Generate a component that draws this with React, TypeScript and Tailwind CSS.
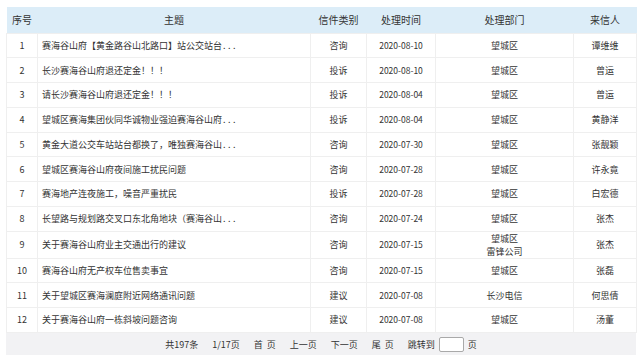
import React from "react";

type Row = {
  no: number;
  title: string;
  more?: boolean;
  type: string;
  date: string;
  dept: string[];
  person: string;
};

const rows: Row[] = [
  { no: 1, title: "赛海谷山府【黄金路谷山北路口】站公交站台", more: true, type: "咨询", date: "2020-08-10", dept: ["望城区"], person: "谭维维" },
  { no: 2, title: "长沙赛海谷山府退还定金！！！", type: "投诉", date: "2020-08-10", dept: ["望城区"], person: "曾运" },
  { no: 3, title: "请长沙赛海谷山府退还定金！！！", type: "投诉", date: "2020-08-04", dept: ["望城区"], person: "曾运" },
  { no: 4, title: "望城区赛海集团伙同华诚物业强迫赛海谷山府", more: true, type: "投诉", date: "2020-08-04", dept: ["望城区"], person: "黄静洋" },
  { no: 5, title: "黄金大道公交车站站台都换了，唯独赛海谷山", more: true, type: "咨询", date: "2020-07-30", dept: ["望城区"], person: "张靓颖" },
  { no: 6, title: "望城区赛海谷山府夜间施工扰民问题", type: "咨询", date: "2020-07-28", dept: ["望城区"], person: "许永竟" },
  { no: 7, title: "赛海地产连夜施工，噪音严重扰民", type: "投诉", date: "2020-07-28", dept: ["望城区"], person: "白宏德" },
  { no: 8, title: "长望路与规划路交叉口东北角地块（赛海谷山", more: true, type: "咨询", date: "2020-07-24", dept: ["望城区"], person: "张杰" },
  { no: 9, title: "关于赛海谷山府业主交通出行的建议", type: "咨询", date: "2020-07-15", dept: ["望城区", "雷锋公司"], person: "张杰" },
  { no: 10, title: "赛海谷山府无产权车位售卖事宜", type: "咨询", date: "2020-07-15", dept: ["望城区"], person: "张磊" },
  { no: 11, title: "关于望城区赛海澜庭附近网络通讯问题", type: "建议", date: "2020-07-08", dept: ["长沙电信"], person: "何思倩" },
  { no: 12, title: "关于赛海谷山府一栋斜坡问题咨询", type: "建议", date: "2020-07-08", dept: ["望城区"], person: "汤董" },
];

const font = { fontFamily: '"Noto Sans CJK SC", "Noto Sans", sans-serif' };

export default function App() {
  return (
    <div className="w-[640px] h-[355px] bg-white overflow-hidden pl-[6px] pt-[7px]" style={font}>
      <div className="w-[630px]">
        <table className="w-[630px] table-fixed border-collapse text-[#333]">
          <colgroup>
            <col className="w-[31px]" />
            <col className="w-[273px]" />
            <col className="w-[56px]" />
            <col className="w-[69px]" />
            <col className="w-[138px]" />
            <col className="w-[63px]" />
          </colgroup>
          <thead>
            <tr className="h-[26px] bg-[#dcedf8] text-[10px] leading-[13px]">
              <th className="font-normal text-center p-0">序号</th>
              <th className="font-normal text-center p-0">主题</th>
              <th className="font-normal text-center p-0">信件类别</th>
              <th className="font-normal text-center p-0">处理时间</th>
              <th className="font-normal text-center p-0">处理部门</th>
              <th className="font-normal text-center p-0">来信人</th>
            </tr>
          </thead>
          <tbody className="text-[9px] leading-[13px]">
            {rows.map((r) => (
              <tr key={r.no} className={r.dept.length > 1 ? "h-[26px]" : "h-[24.75px]"}>
                <td className="p-0 text-center border border-[#efefef]">{r.no}</td>
                <td className="p-0 pl-1 text-left border border-[#efefef] whitespace-nowrap overflow-hidden">
                  {r.title}
                  {r.more && <span className="tracking-[2.5px] ml-[1px]">...</span>}
                </td>
                <td className="p-0 text-center border border-[#efefef]">{r.type}</td>
                <td className="p-0 text-center border border-[#efefef] text-[8.5px]">{r.date}</td>
                <td className="p-0 text-center border border-[#efefef]">
                  {r.dept.map((d) => (
                    <div key={d}>{d}</div>
                  ))}
                </td>
                <td className="p-0 text-center border border-[#efefef]">{r.person}</td>
              </tr>
            ))}
          </tbody>
        </table>
        <div className="h-[23px] bg-[#f2f2f4] flex items-center justify-center text-[9px] text-[#333] gap-[14px]">
          <span>共197条</span>
          <span>1/17页</span>
          <span>首<span className="ml-[4px]">页</span></span>
          <span>上一页</span>
          <span>下一页</span>
          <span>尾<span className="ml-[4px]">页</span></span>
          <span className="flex items-center gap-[4px]">
            跳转到
            <span className="inline-block w-[25px] h-[15px] bg-white border border-[#a9a9a9] rounded-[2px]" />
            页
          </span>
        </div>
      </div>
    </div>
  );
}
